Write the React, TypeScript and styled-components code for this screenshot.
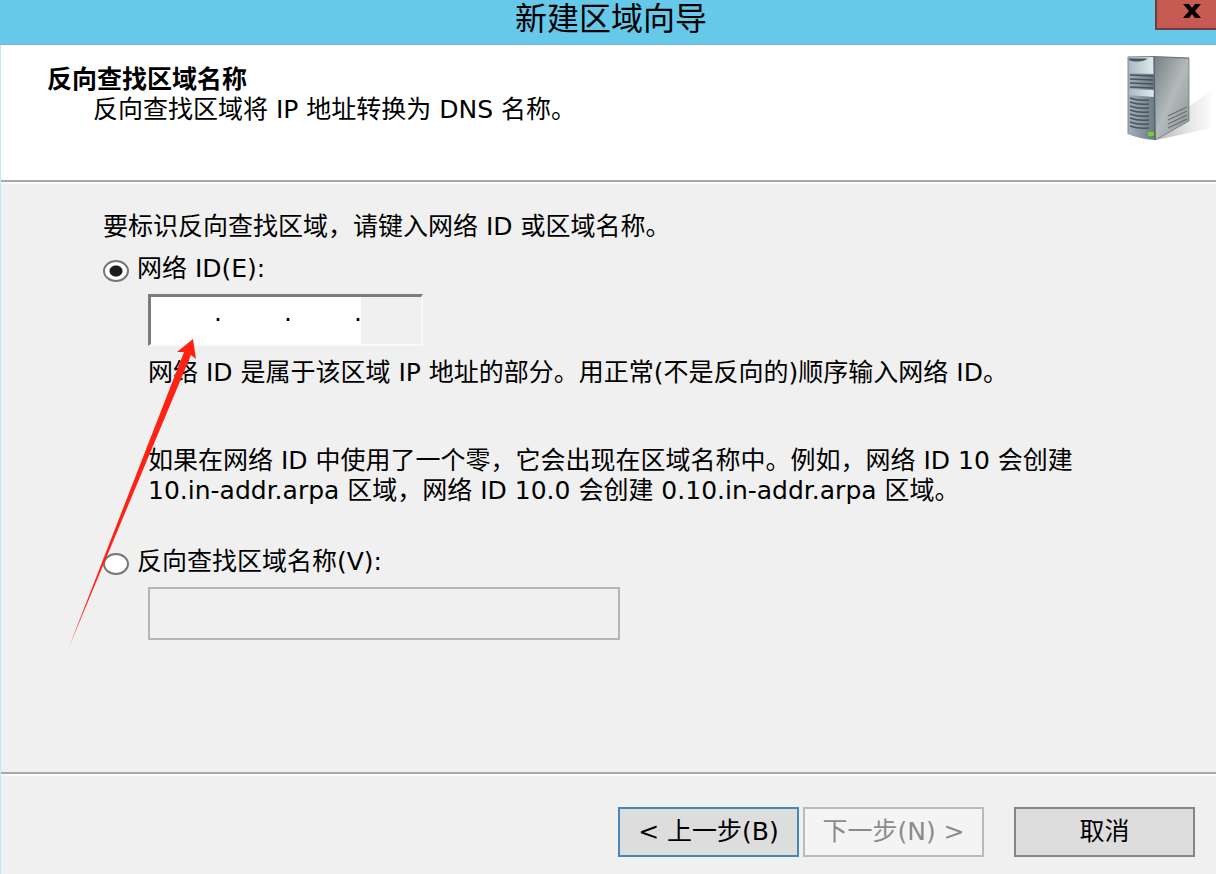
import React, { useState } from "react";
import styled, { createGlobalStyle } from "styled-components";

const GlobalStyle = createGlobalStyle`
  * { box-sizing: border-box; }
  html, body, #root { height: 100%; }
  body {
    margin: 0;
    background: #f0f0f0;
    color: #000;
    font-family: "DejaVu Sans", "Noto Sans CJK SC", sans-serif;
    font-size: 25px;
    line-height: 30px;
  }
  input, button { font: inherit; color: inherit; }
`;

const Dialog = styled.main`
  position: relative;
  display: flex;
  flex-direction: column;
  min-height: 100%;
  border-left: 1px solid #c2e9f7;
`;

const TitleBar = styled.header`
  position: relative;
  height: 45px;
  margin-left: -1px;
  padding-left: 6px;
  display: flex;
  align-items: flex-start;
  justify-content: center;
  background: #66c9ea;
  border-bottom: 1px solid #7cb3c9;
`;

const Title = styled.h1`
  margin: 0;
  font-size: 32px;
  line-height: 38px;
  font-weight: 400;
`;

const CloseButton = styled.button`
  position: absolute;
  top: 0;
  right: 0;
  width: 61px;
  height: 30px;
  padding: 0 0 6px 11px;
  display: flex;
  align-items: center;
  justify-content: center;
  background: #c75a52;
  border: solid #6f3c42;
  border-width: 0 0 2px 2px;
`;

const Banner = styled.section`
  display: flex;
  justify-content: space-between;
  height: 137px;
  padding: 7px 2px 0 46px;
  background: #fff;
  border-bottom: 2px solid #a9a9a9;
`;

const BannerCopy = styled.div`
  padding-top: 13px;
`;

const BannerTitle = styled.h2`
  margin: 0;
  font-size: 25px;
  line-height: 30px;
  font-weight: 700;
`;

const BannerText = styled.p`
  margin: 0 0 0 46px;
`;

const Body = styled.section`
  flex: 1;
  padding: 28px 60px 0 102px;
  border-top: 2px solid #fafafa;
`;

const Text = styled.p`
  margin: 0;
`;

const Choice = styled.label`
  display: flex;
  align-items: center;
  gap: 8px;
  margin-top: 12px;
`;

const Radio = styled.input`
  appearance: none;
  flex: none;
  width: 26px;
  height: 22px;
  margin: 4px 0 0;
  border: 2px solid #777;
  border-radius: 50%;
  background: #fff;
  &:checked {
    background: radial-gradient(ellipse 7px 6px, #1c1c1c 85%, #fff 100%);
  }
`;

const Indented = styled.div`
  display: flex;
  flex-direction: column;
  margin: 10px 0 41px 45px;
`;

const IpField = styled.div`
  display: flex;
  align-items: stretch;
  width: 275px;
  height: 52px;
  margin-bottom: 12px;
  border: solid;
  border-width: 3px 2px 2px 3px;
  border-color: #7c7c7c #fafafa #fafafa #7c7c7c;
`;

const Octet = styled.input`
  width: 64px;
  min-width: 0;
  padding: 0;
  border: 0;
  outline: 0;
  text-align: center;
  background: #fff;
  &:disabled {
    flex: 1;
    background: #f0f0f0;
  }
`;

const Dot = styled.span`
  width: 6px;
  display: flex;
  justify-content: center;
  line-height: 32px;
  background: #fff;
`;

const Example = styled(Text)`
  margin-top: 58px;
`;

const NameInput = styled.input`
  width: 472px;
  max-width: 100%;
  height: 53px;
  padding: 0 8px;
  border: 2px solid #b1b6b9;
  background: #f0f0f0;
`;

const Footer = styled.footer`
  display: flex;
  justify-content: flex-end;
  align-items: flex-start;
  gap: 4px;
  height: 102px;
  padding: 33px 21px 0;
  border-top: 2px solid #a9a9a9;
  box-shadow: inset 0 2px #fafafa;
`;

const PushButton = styled.button<{ $tone?: "default" | "cancel" }>`
  width: 181px;
  height: 50px;
  padding: 0;
  background: #ddd;
  border: 2px solid ${(p) => (p.$tone === "default" ? "#4588b5" : "#858585")};
  margin-left: ${(p) => (p.$tone === "cancel" ? 26 : 0)}px;
  &:disabled {
    color: #8b8b8b;
    background: #f4f4f4;
    border-color: #b7bbbd;
  }
`;

const Arrow = styled.svg`
  position: absolute;
  left: 64px;
  top: 338px;
  width: 132px;
  height: 312px;
  pointer-events: none;
`;

const TOP_SLOTS = [24, 28, 32, 36];
const LOWER_SLOTS = [47, 51, 55, 59, 63, 67, 71, 75];
const VENTS = [64, 68, 72, 76];

function ServerTower() {
  return (
    <svg width="90" height="92" viewBox="0 0 90 92" aria-hidden="true">
      <defs>
        <linearGradient id="side" x1="0" y1="0" x2="1" y2="1">
          <stop offset="0" stopColor="#777f81" />
          <stop offset="0.5" stopColor="#b3babb" />
          <stop offset="1" stopColor="#8b9293" />
        </linearGradient>
        <linearGradient id="front" x1="0" y1="0" x2="1" y2="0">
          <stop offset="0" stopColor="#a9b8c0" />
          <stop offset="1" stopColor="#e2edf1" />
        </linearGradient>
        <linearGradient id="bay" x1="0" y1="0" x2="1" y2="0">
          <stop offset="0" stopColor="#a3b0b8" />
          <stop offset="1" stopColor="#6b7983" />
        </linearGradient>
        <linearGradient id="shade" x1="0" y1="0" x2="1" y2="0">
          <stop offset="0" stopColor="#b4b4b4" />
          <stop offset="0.6" stopColor="#e6e6e6" />
          <stop offset="1" stopColor="#fcfcfc" />
        </linearGradient>
      </defs>
      <path d="M32 88 L62 56 L88 39 V76 Z" fill="url(#shade)" />
      <path d="M30 5 L65 6.500 V69 L31 88 Z" fill="url(#side)" stroke="#737a7c" strokeWidth="0.8" />
      <path d="M4 5.500 L30 5 L31 88 Q16 87 4 82 Z" fill="url(#front)" />
      <path d="M5 6.500 L24 6.500 Q20 9.500 14 9.500 Q8 9.500 5 8 Z" fill="#4a565f" />
      <path d="M4 21 L30 22 V38 L4 37 Z" fill="url(#bay)" />
      <path d="M4 43 L30 45 L31 88 Q16 87 4 82 Z" fill="url(#bay)" />
      {TOP_SLOTS.map((y) => (
        <path key={y} d={`M6 ${y - 1} L29 ${y}`} stroke="#47545f" strokeWidth="1.3" />
      ))}
      {LOWER_SLOTS.map((y) => (
        <path key={y} d={`M6 ${y - 1} Q14 ${y + 2} 25 ${y + 1}`} stroke="#47545f" strokeWidth="1.6" fill="none" />
      ))}
      <path d="M30 5 L31 88" stroke="#56626b" strokeWidth="1.4" />
      <path d="M4 5 V82" stroke="#7d8a92" strokeWidth="1" />
      <path d="M4 5 L30 4.500 L65 6" stroke="#6f7779" strokeWidth="1" fill="none" />
      {VENTS.map((y) => (
        <path key={y} d={`M44 ${y} L63 ${y - 9}`} stroke="#687072" strokeWidth="1.2" />
      ))}
      <ellipse cx="27" cy="82" rx="3" ry="2.200" fill="#6fd823" />
    </svg>
  );
}

export default function App() {
  const [mode, setMode] = useState<"id" | "name">("id");
  return (
    <Dialog>
      <GlobalStyle />
      <TitleBar>
        <Title>新建区域向导</Title>
        <CloseButton type="button" aria-label="关闭">
          <svg width="20" height="15" viewBox="0 0 20 15" aria-hidden="true">
            <path d="M1 0 H7 L10 4 L13 0 H19 L13 7 L19 14 H13 L10 10 L7 14 H1 L7 7 Z" fill="#000" />
          </svg>
        </CloseButton>
      </TitleBar>

      <Banner>
        <BannerCopy>
          <BannerTitle>反向查找区域名称</BannerTitle>
          <BannerText>反向查找区域将 IP 地址转换为 DNS 名称。</BannerText>
        </BannerCopy>
        <ServerTower />
      </Banner>

      <Body>
        <Text>要标识反向查找区域，请键入网络 ID 或区域名称。</Text>
        <Choice>
          <Radio type="radio" name="zone" checked={mode === "id"} onChange={() => setMode("id")} />
          网络 ID(E):
        </Choice>
        <Indented>
          <IpField role="group" aria-label="网络 ID">
            <Octet aria-label="1" maxLength={3} />
            <Dot>.</Dot>
            <Octet aria-label="2" maxLength={3} />
            <Dot>.</Dot>
            <Octet aria-label="3" maxLength={3} />
            <Dot>.</Dot>
            <Octet aria-label="4" disabled />
          </IpField>
          <Text>网络 ID 是属于该区域 IP 地址的部分。用正常(不是反向的)顺序输入网络 ID。</Text>
          <Example>
            如果在网络 ID 中使用了一个零，它会出现在区域名称中。例如，网络 ID 10 会创建
            <br />
            10.in-addr.arpa 区域，网络 ID 10.0 会创建 0.10.in-addr.arpa 区域。
          </Example>
        </Indented>
        <Choice>
          <Radio type="radio" name="zone" checked={mode === "name"} onChange={() => setMode("name")} />
          反向查找区域名称(V):
        </Choice>
        <Indented>
          <NameInput aria-label="反向查找区域名称" disabled={mode !== "name"} />
        </Indented>
      </Body>

      <Footer>
        <PushButton type="button" $tone="default">&lt; 上一步(B)</PushButton>
        <PushButton type="button" disabled>下一步(N) &gt;</PushButton>
        <PushButton type="button" $tone="cancel">取消</PushButton>
      </Footer>

      <Arrow viewBox="0 0 132 312" aria-hidden="true">
        <path d="M128 1 L112 14 L119 14 L4 309 L126 17 L131 21 Z" fill="#ff2213" />
      </Arrow>
    </Dialog>
  );
}
